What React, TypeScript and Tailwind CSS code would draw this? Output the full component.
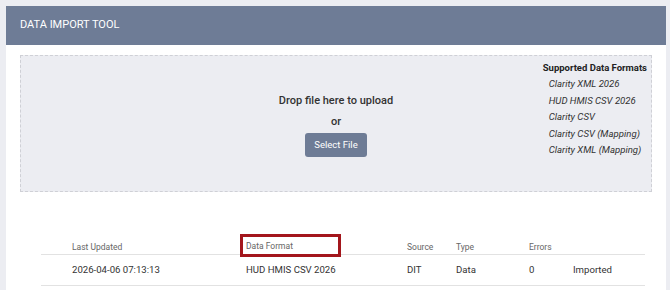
import React from "react";

const formats = [
  "Clarity XML 2026",
  "HUD HMIS CSV 2026",
  "Clarity CSV",
  "Clarity CSV (Mapping)",
  "Clarity XML (Mapping)",
];

const cols = "grid grid-cols-[174px_161px_49px_73px_44px_1fr] pl-[31px]";

export default function App() {
  return (
    <div
      className="min-h-[290px] w-[670px] bg-[#ecedf2] pt-[6px] pl-[6px] pr-[4px]"
      style={{ fontFamily: "Roboto, 'Liberation Sans', sans-serif" }}
    >
      <div className="h-[284px] bg-white">
        <div className="flex h-[39px] items-center bg-[#6e7c96] pl-[14px] text-[11px] text-white">
          DATA IMPORT TOOL
        </div>
        <div className="px-[14px] pt-[10px]">
          <div className="grid h-[137px] grid-cols-[1fr_auto_1fr] border border-dashed border-[#cfd0d6] bg-[#ecedf2]">
            <div />
            <div className="flex flex-col items-center pt-[38px]">
              <div className="text-[11px] font-medium leading-[14px] text-[#333]">
                Drop file here to upload
              </div>
              <div className="mt-[7px] text-[11px] font-medium leading-[14px] text-[#333]">
                or
              </div>
              <button className="mt-[4px] h-[24px] w-[62px] rounded-[3px] bg-[#6e7c96] text-[9.5px] text-white">
                Select File
              </button>
            </div>
            <div className="flex justify-end pr-[4px] pt-[6px]">
              <div className="flex flex-col">
                <div className="text-[9.5px] font-bold leading-[12px] text-[#222]">
                  Supported Data Formats
                </div>
                <div className="mt-[4px] flex flex-col gap-[4.6px] pl-[6px]">
                  {formats.map((f) => (
                    <div key={f} className="text-[9.6px] italic leading-[12px] text-[#333]">
                      {f}
                    </div>
                  ))}
                </div>
              </div>
            </div>
          </div>
        </div>
        <div className="mx-[35px] mt-[42px] mr-[21px]">
          <div className={`${cols} h-[21px] items-end border-b border-[#e2e2e2] pb-[1px] text-[8.5px] leading-[12px] text-[#666]`}>
            <div>Last Updated</div>
            <div className="relative">
              <div className="absolute -left-[6px] -top-[7px] h-[23px] w-[101px] border-[3px] border-[#a3161c] bg-white pl-[3px] pt-[3px]">
                Data Format
              </div>
              <span className="invisible">Data Format</span>
            </div>
            <div>Source</div>
            <div>Type</div>
            <div>Errors</div>
            <div />
          </div>
          <div className={`${cols} h-[31px] items-center border-b border-[#e2e2e2] text-[9.6px] text-[#333]`}>
            <div>2026-04-06 07:13:13</div>
            <div>HUD HMIS CSV 2026</div>
            <div>DIT</div>
            <div>Data</div>
            <div>0</div>
            <div>Imported</div>
          </div>
        </div>
      </div>
    </div>
  );
}
